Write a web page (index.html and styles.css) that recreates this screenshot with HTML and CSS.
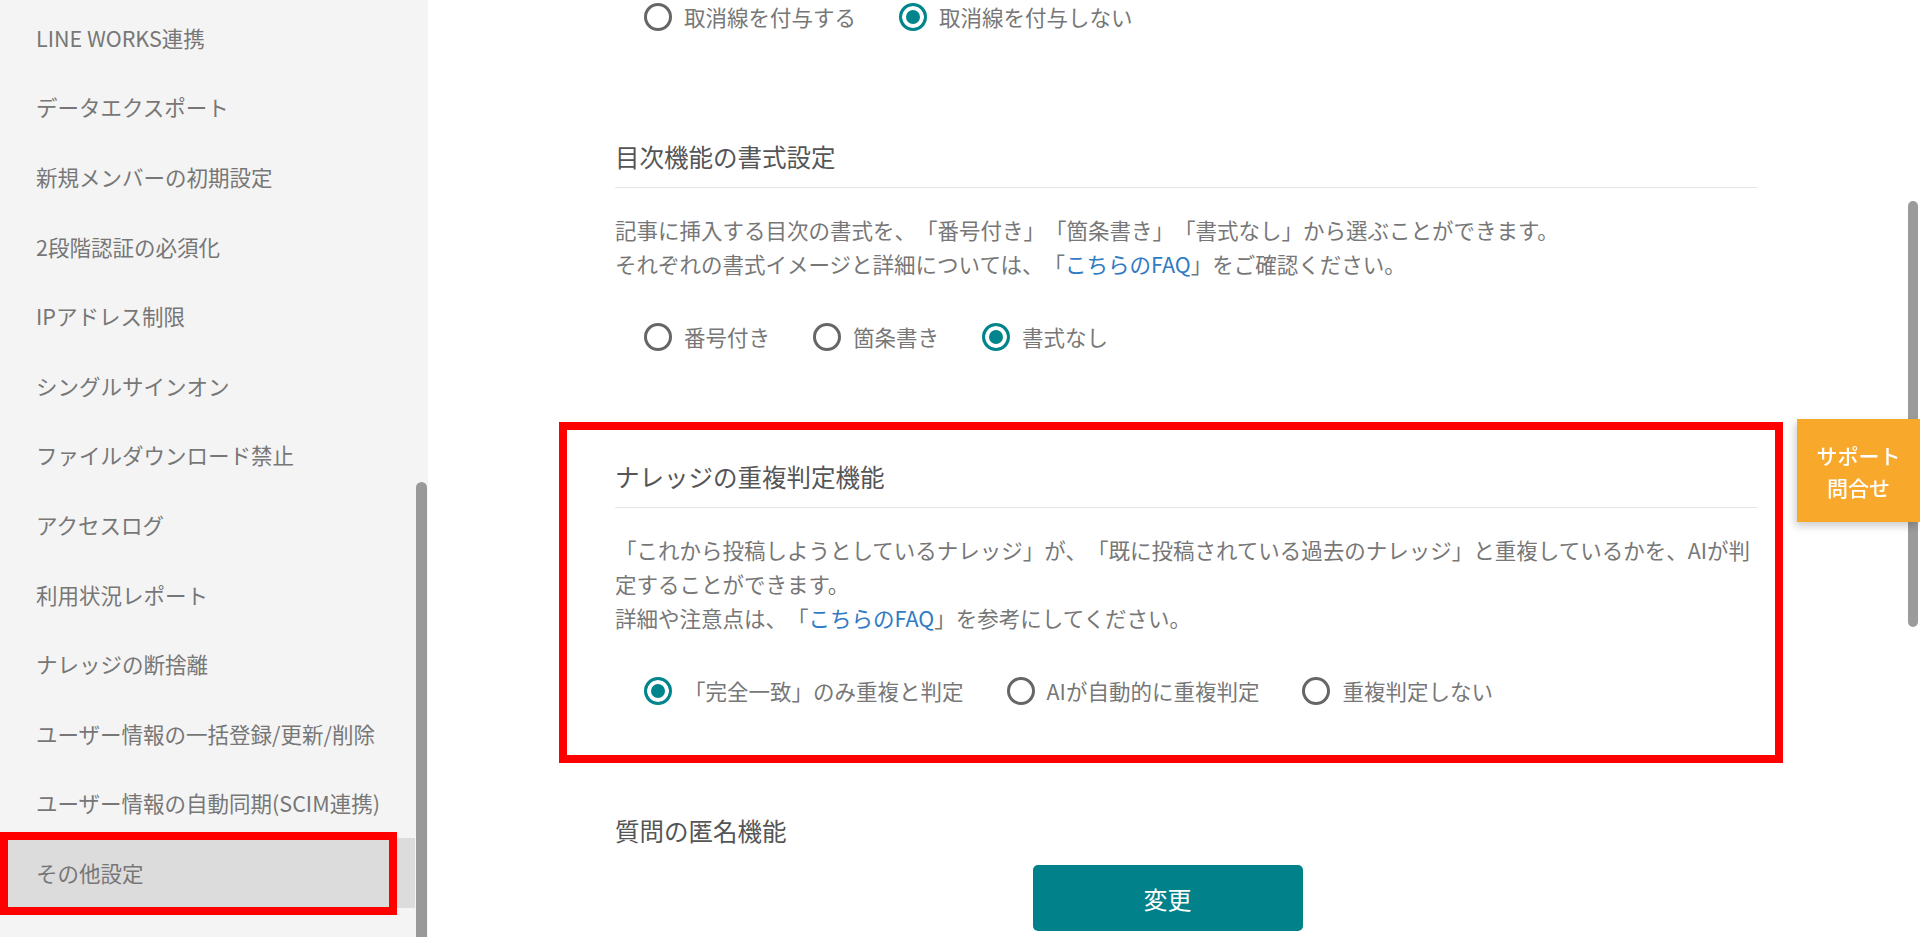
FILE: index.html
```html
<!DOCTYPE html>
<html lang="ja">
<head>
  <meta charset="UTF-8">
  <meta name="viewport" content="width=device-width, initial-scale=1.0">
  <title>その他設定</title>
  <link rel="stylesheet" href="styles.css">
</head>
<body>
  <div class="layout">
    <aside class="sidebar">
      <ul class="nav">
        <li class="nav-item">LINE WORKS連携</li>
        <li class="nav-item">データエクスポート</li>
        <li class="nav-item">新規メンバーの初期設定</li>
        <li class="nav-item">2段階認証の必須化</li>
        <li class="nav-item">IPアドレス制限</li>
        <li class="nav-item">シングルサインオン</li>
        <li class="nav-item">ファイルダウンロード禁止</li>
        <li class="nav-item">アクセスログ</li>
        <li class="nav-item">利用状況レポート</li>
        <li class="nav-item">ナレッジの断捨離</li>
        <li class="nav-item">ユーザー情報の一括登録/更新/削除</li>
        <li class="nav-item">ユーザー情報の自動同期(SCIM連携)</li>
        <li class="nav-item active">その他設定</li>
      </ul>
      <div class="side-thumb"></div>
    </aside>

    <main class="main">
      <div class="content">
        <!-- strikethrough setting (heading scrolled out of view) -->
        <div class="radios first">
          <label class="radio"><input type="radio" name="strike"><span>取消線を付与する</span></label>
          <label class="radio"><input type="radio" name="strike" checked><span>取消線を付与しない</span></label>
        </div>

        <section class="setting">
          <h2 class="setting-title">目次機能の書式設定</h2>
          <p class="setting-desc">
            記事に挿入する目次の書式を、「番号付き」「箇条書き」「書式なし」から選ぶことができます。<br>
            それぞれの書式イメージと詳細については、「<a href="#">こちらのFAQ</a>」をご確認ください。
          </p>
          <div class="radios">
            <label class="radio"><input type="radio" name="toc"><span>番号付き</span></label>
            <label class="radio"><input type="radio" name="toc"><span>箇条書き</span></label>
            <label class="radio"><input type="radio" name="toc" checked><span>書式なし</span></label>
          </div>
        </section>

        <section class="setting highlight">
          <h2 class="setting-title">ナレッジの重複判定機能</h2>
          <p class="setting-desc">
            「これから投稿しようとしているナレッジ」が、「既に投稿されている過去のナレッジ」と重複しているかを、AIが判定することができます。<br>
            詳細や注意点は、「<a href="#">こちらのFAQ</a>」を参考にしてください。
          </p>
          <div class="radios">
            <label class="radio"><input type="radio" name="dup" checked><span>「完全一致」のみ重複と判定</span></label>
            <label class="radio"><input type="radio" name="dup"><span>AIが自動的に重複判定</span></label>
            <label class="radio"><input type="radio" name="dup"><span>重複判定しない</span></label>
          </div>
        </section>

        <section class="setting">
          <h2 class="setting-title">質問の匿名機能</h2>
        </section>
      </div>
    </main>
  </div>

  <button class="support">サポート<br>問合せ</button>
  <div class="page-thumb"></div>

  <div class="footer">
    <button class="submit">変更</button>
  </div>
</body>
</html>
```

FILE: styles.css
```css
html, body {
  margin: 0;
  padding: 0;
  height: 100%;
  overflow: hidden;
}
body {
  font-family: "Noto Sans CJK JP", "Noto Sans", sans-serif;
  font-size: 21.5px;
  color: #777;
  background: #fff;
  text-spacing-trim: space-all;
}
.layout {
  display: flex;
  height: 100vh;
}

/* sidebar */
.sidebar {
  position: relative;
  width: 428px;
  flex-shrink: 0;
  background: #f4f4f4;
  padding-top: 3px;
  box-sizing: border-box;
}
.nav {
  list-style: none;
  margin: 0;
  padding: 0;
  width: 415px;
}
.nav-item {
  position: relative;
  padding: 17.8px 0 17.8px 36px;
  line-height: 34px;
  white-space: nowrap;
}
.nav-item.active {
  background: #dcdcdc;
}
.nav-item.active::after {
  content: "";
  position: absolute;
  left: 0;
  top: -6px;
  width: 397px;
  height: 83px;
  border: 8px solid #ff0000;
  box-sizing: border-box;
}
.side-thumb {
  position: absolute;
  left: 416px;
  top: 482px;
  width: 11px;
  bottom: -20px;
  border-radius: 6px;
  background: #999;
}

/* main */
.main {
  flex: 1;
  overflow: hidden;
}
.content {
  width: 1142px;
  padding-left: 187px;
}
.setting {
  position: relative;
  margin-top: 105px;
}
.setting-title {
  margin: 0;
  font-size: 24.5px;
  font-weight: 400;
  line-height: 36px;
  color: #555;
  padding-bottom: 12px;
  border-bottom: 1px solid #e6e6e6;
}
.setting-desc {
  margin: 25px 0 0;
  padding-right: 6px;
  line-height: 34px;
}
.setting-desc a {
  color: #2f7bc4;
  text-decoration: none;
}
.highlight::after {
  content: "";
  position: absolute;
  left: -56px;
  top: -37px;
  width: 1224px;
  height: 341px;
  border: 8px solid #ff0000;
  box-sizing: border-box;
}

/* radio rows */
.radios {
  display: flex;
  gap: 43px;
  padding-left: 29px;
  margin-top: 39px;
  line-height: 34px;
}
.radios.first {
  margin-top: 0;
}
.radio {
  display: flex;
  align-items: center;
  gap: 12px;
  white-space: nowrap;
}
.radio input {
  appearance: none;
  -webkit-appearance: none;
  width: 28px;
  height: 28px;
  margin: 0;
  border: 3px solid #666;
  border-radius: 50%;
  background: #fff;
  box-sizing: border-box;
}
.radio input:checked {
  border-color: #01858c;
  background: #01858c;
  box-shadow: inset 0 0 0 4px #fff;
}

/* floating parts */
.support {
  position: fixed;
  top: 419px;
  right: 0;
  width: 123px;
  height: 103px;
  border: none;
  background: #f8a82b;
  color: #fff;
  font-family: inherit;
  font-size: 21px;
  font-weight: 500;
  line-height: 32px;
  box-shadow: -2px 4px 8px rgba(0, 0, 0, 0.2);
  z-index: 3;
}
.page-thumb {
  position: fixed;
  right: 2px;
  top: 201px;
  width: 10px;
  height: 426px;
  border-radius: 5px;
  background: #9b9b9b;
  z-index: 2;
}
.footer {
  position: fixed;
  left: 428px;
  right: 13px;
  bottom: 0;
  padding: 15px 0 6px;
  background: #fff;
  display: flex;
  justify-content: center;
}
.submit {
  width: 270px;
  height: 66px;
  border: none;
  border-radius: 5px;
  background: #01828a;
  color: #fff;
  font-family: inherit;
  font-size: 24px;
}
```
